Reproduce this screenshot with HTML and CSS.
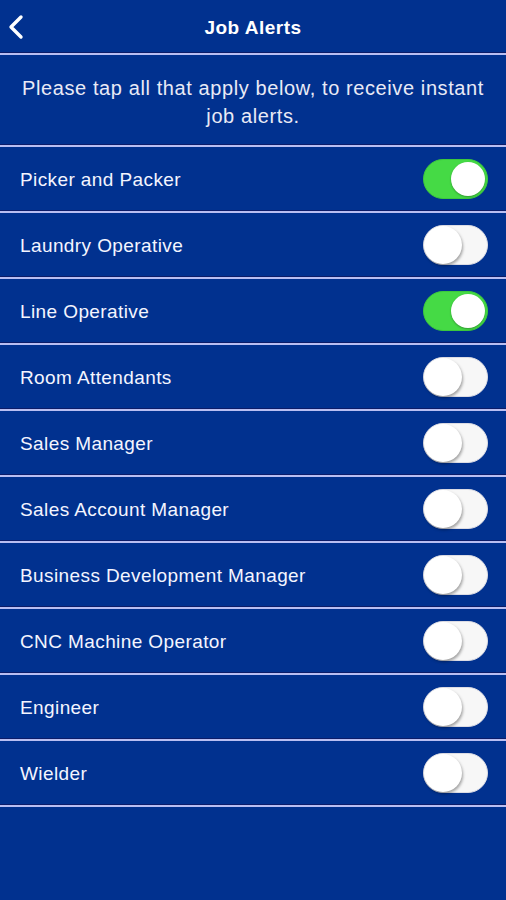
FILE: index.html
```html
<!DOCTYPE html>
<html lang="en">
<head>
    <meta charset="UTF-8">
    <meta name="viewport" content="width=device-width, initial-scale=1.0">
    <title>Job Alerts</title>
    <link rel="stylesheet" href="styles.css">
</head>
<body>
    <div class="header">
        <a class="back" href="#">
            <svg width="18" height="26" viewBox="0 0 18 26"><polyline points="14,3 4,13 14,23" fill="none" stroke="#fff" stroke-width="3.4" stroke-linecap="round" stroke-linejoin="round"/></svg>
        </a>
        <h1>Job Alerts</h1>
    </div>

    <p class="intro">Please tap all that apply below, to receive instant job alerts.</p>

    <ul class="alerts">
        <li class="row"><span>Picker and Packer</span><span class="toggle on"></span></li>
        <li class="row"><span>Laundry Operative</span><span class="toggle"></span></li>
        <li class="row"><span>Line Operative</span><span class="toggle on"></span></li>
        <li class="row"><span>Room Attendants</span><span class="toggle"></span></li>
        <li class="row"><span>Sales Manager</span><span class="toggle"></span></li>
        <li class="row"><span>Sales Account Manager</span><span class="toggle"></span></li>
        <li class="row"><span>Business Development Manager</span><span class="toggle"></span></li>
        <li class="row"><span>CNC Machine Operator</span><span class="toggle"></span></li>
        <li class="row"><span>Engineer</span><span class="toggle"></span></li>
        <li class="row"><span>Wielder</span><span class="toggle"></span></li>
    </ul>
</body>
</html>
```

FILE: styles.css
```css
body {
    margin: 0;
    background: #01318f;
    color: #f4f5ff;
    font-family: "Liberation Sans", Arial, sans-serif;
    min-height: 900px;
}
.header {
    height: 53px;
    display: flex;
    align-items: center;
    justify-content: center;
    position: relative;
    border-bottom: 2px solid #b9bef2;
    box-shadow: inset 0 -1px 0 #0c1c68;
}
.back {
    position: absolute;
    left: 7px;
    top: 14px;
    line-height: 0;
}
.header h1 {
    margin: 2px 0 0;
    font-size: 19px;
    font-weight: bold;
    letter-spacing: 0.5px;
    color: #fff;
}
.intro {
    margin: 0;
    padding: 19px 18px 15px;
    text-align: center;
    font-size: 20px;
    line-height: 28px;
    letter-spacing: 0.6px;
    color: #e9eaf6;
    border-bottom: 2px solid #b9bef2;
    box-shadow: inset 0 -1px 0 #0c1c68, 0 -1px 0 #0c1c68;
}
.alerts {
    list-style: none;
    margin: 0;
    padding: 0;
}
.row {
    height: 64px;
    display: flex;
    align-items: center;
    justify-content: space-between;
    padding: 0 18px 0 20px;
    font-size: 19px;
    letter-spacing: 0.4px;
    border-bottom: 2px solid #b9bef2;
    box-shadow: inset 0 -1px 0 #0c1c68;
}
.row span:first-child {
    margin-top: 1px;
}
.toggle {
    width: 63px;
    height: 38px;
    border-radius: 20px;
    background: #f7f7f7;
    border: 1px solid #dcdce4;
    position: relative;
}
.toggle::after {
    content: "";
    position: absolute;
    top: 0;
    left: 0;
    width: 38px;
    height: 38px;
    border-radius: 50%;
    background: #fff;
    box-shadow: 1px 2px 3px rgba(0, 0, 0, 0.35);
}
.toggle.on {
    background: #45da45;
    border-color: #3cc83c;
}
.toggle.on::after {
    top: 2px;
    left: 27px;
    width: 34px;
    height: 34px;
    box-shadow: 0 1px 2px rgba(0, 0, 0, 0.3);
}
```
